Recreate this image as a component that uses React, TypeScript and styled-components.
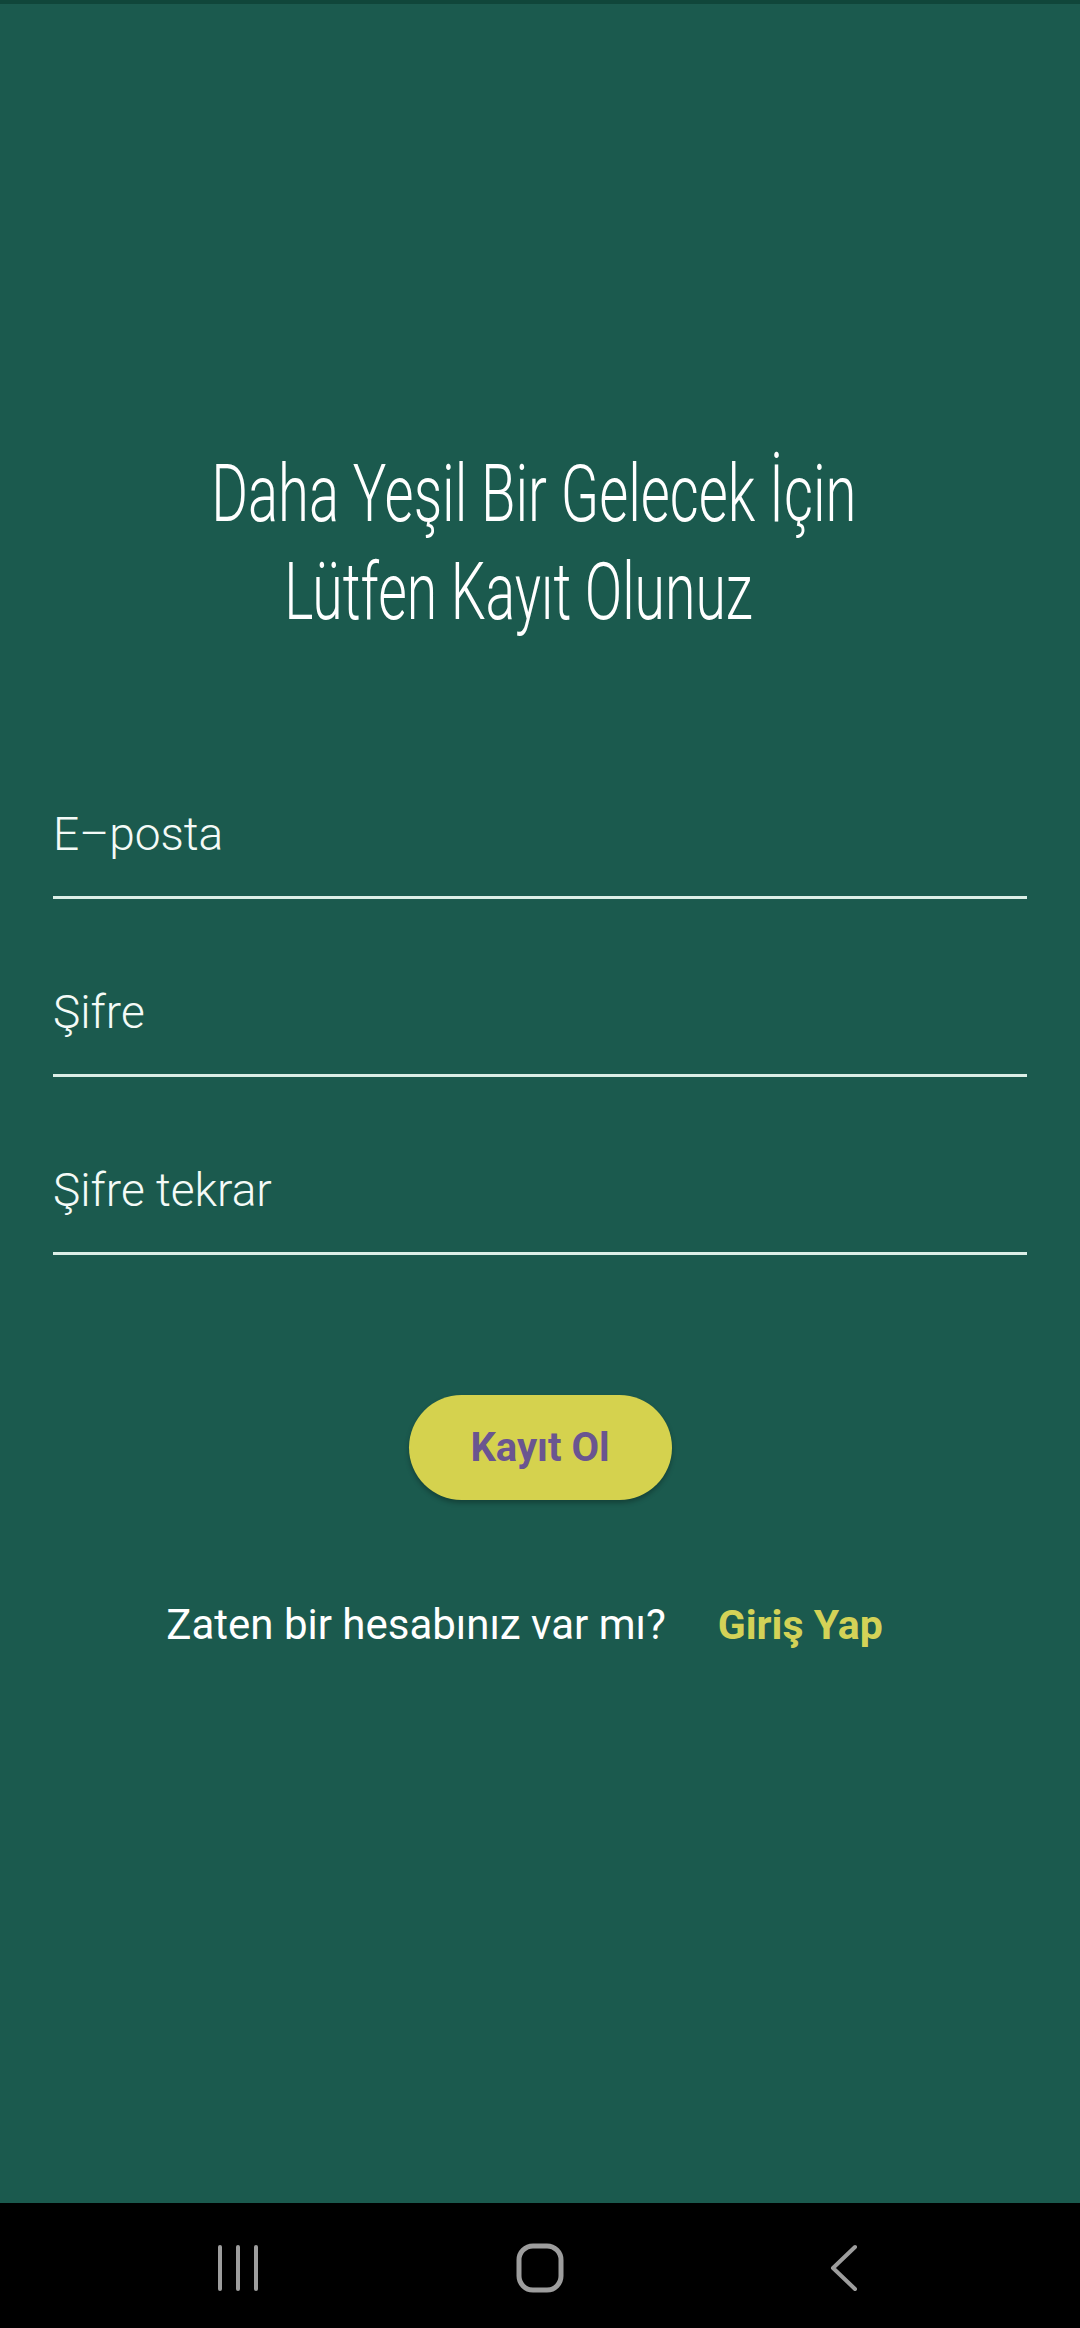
import React from "react";
import styled, { createGlobalStyle } from "styled-components";

const GlobalStyle = createGlobalStyle`
  html, body {
    margin: 0;
    padding: 0;
    background: #1b5a4e;
  }
  * { box-sizing: border-box; }
`;

const Screen = styled.div`
  width: 1080px;
  height: 2328px;
  display: flex;
  flex-direction: column;
  background: #1b5a4e;
  font-family: Roboto, "Noto Sans", sans-serif;
  overflow: hidden;
`;

const StatusStrip = styled.div`
  height: 4px;
  flex: none;
  background: #10463a;
`;

const Main = styled.main`
  flex: 1;
  display: flex;
  flex-direction: column;
  padding-top: 441px;
`;

const Title = styled.h1`
  margin: 0;
  display: flex;
  flex-direction: column;
  align-items: center;
  font-family: Roboto, "Noto Sans", sans-serif;
  font-weight: 300;
  font-size: 79px;
  line-height: 98px;
  color: #ffffff;
`;

const TitleLine = styled.span<{ $shift: number; $squeeze: number }>`
  display: block;
  white-space: nowrap;
  transform: translateX(${(p) => p.$shift}px) scaleX(${(p) => p.$squeeze});
  transform-origin: center;
`;

const Form = styled.form`
  margin-top: 166px;
  padding: 0 53px;
  display: flex;
  flex-direction: column;
  gap: 86px;
`;

const Field = styled.label`
  display: block;
  padding-bottom: 35px;
  border-bottom: 3px solid #dcefe7;
  font-family: Roboto, "Noto Sans", sans-serif;
  font-weight: 300;
  font-size: 46px;
  line-height: 54px;
  color: #f4faf7;
`;

const SubmitButton = styled.button`
  align-self: center;
  margin-top: 140px;
  width: 263px;
  height: 105px;
  border: none;
  border-radius: 53px;
  background: #d5d24e;
  color: #6a5590;
  font-family: Roboto, "Noto Sans", sans-serif;
  font-weight: 700;
  font-size: 40px;
  box-shadow: 0 3px 5px rgba(0, 0, 0, 0.28);
  cursor: pointer;
`;

const LoginRow = styled.div`
  margin-top: 101px;
  padding-right: 31px;
  display: flex;
  justify-content: center;
  align-items: baseline;
  gap: 52px;
  font-family: Roboto, "Noto Sans", sans-serif;
  line-height: 48px;
`;

const Question = styled.span`
  font-size: 42px;
  font-weight: 400;
  color: #ffffff;
`;

const LoginLink = styled.a`
  font-size: 41px;
  font-weight: 700;
  color: #d3d257;
  text-decoration: none;
`;

const NavBar = styled.nav`
  height: 125px;
  flex: none;
  background: #000000;
  display: flex;
  justify-content: center;
  align-items: center;
  gap: 242px;
  padding-top: 5px;
`;

const NavSlot = styled.div`
  width: 60px;
  height: 50px;
  display: flex;
  align-items: center;
  justify-content: center;
`;

const ICON = "#9d9d9d";

const RecentsIcon = () => (
  <svg width="60" height="50" viewBox="0 0 60 50">
    <g stroke={ICON} strokeWidth="4" strokeLinecap="round">
      <line x1="12" y1="4" x2="12" y2="46" />
      <line x1="30" y1="4" x2="30" y2="46" />
      <line x1="48" y1="4" x2="48" y2="46" />
    </g>
  </svg>
);

const HomeIcon = () => (
  <svg width="60" height="50" viewBox="0 0 60 50">
    <rect x="9" y="3" width="42" height="44" rx="14" ry="14" fill="none" stroke={ICON} strokeWidth="5" />
  </svg>
);

const BackIcon = () => (
  <svg width="60" height="50" viewBox="0 0 60 50">
    <polyline points="43,4 21,25 43,46" fill="none" stroke={ICON} strokeWidth="4" strokeLinecap="round" strokeLinejoin="round" />
  </svg>
);

export default function App() {
  return (
    <>
      <GlobalStyle />
      <Screen>
        <StatusStrip />
        <Main>
          <Title>
            <TitleLine $shift={-6} $squeeze={0.711}>Daha Yeşil Bir Gelecek İçin</TitleLine>
            <TitleLine $shift={-21} $squeeze={0.7}>Lütfen Kayıt Olunuz</TitleLine>
          </Title>
          <Form onSubmit={(e) => e.preventDefault()}>
            <Field>E–posta</Field>
            <Field>Şifre</Field>
            <Field>Şifre tekrar</Field>
          </Form>
          <SubmitButton type="button">Kayıt Ol</SubmitButton>
          <LoginRow>
            <Question>Zaten bir hesabınız var mı?</Question>
            <LoginLink href="#">Giriş Yap</LoginLink>
          </LoginRow>
        </Main>
        <NavBar>
          <NavSlot>
            <RecentsIcon />
          </NavSlot>
          <NavSlot>
            <HomeIcon />
          </NavSlot>
          <NavSlot>
            <BackIcon />
          </NavSlot>
        </NavBar>
      </Screen>
    </>
  );
}
